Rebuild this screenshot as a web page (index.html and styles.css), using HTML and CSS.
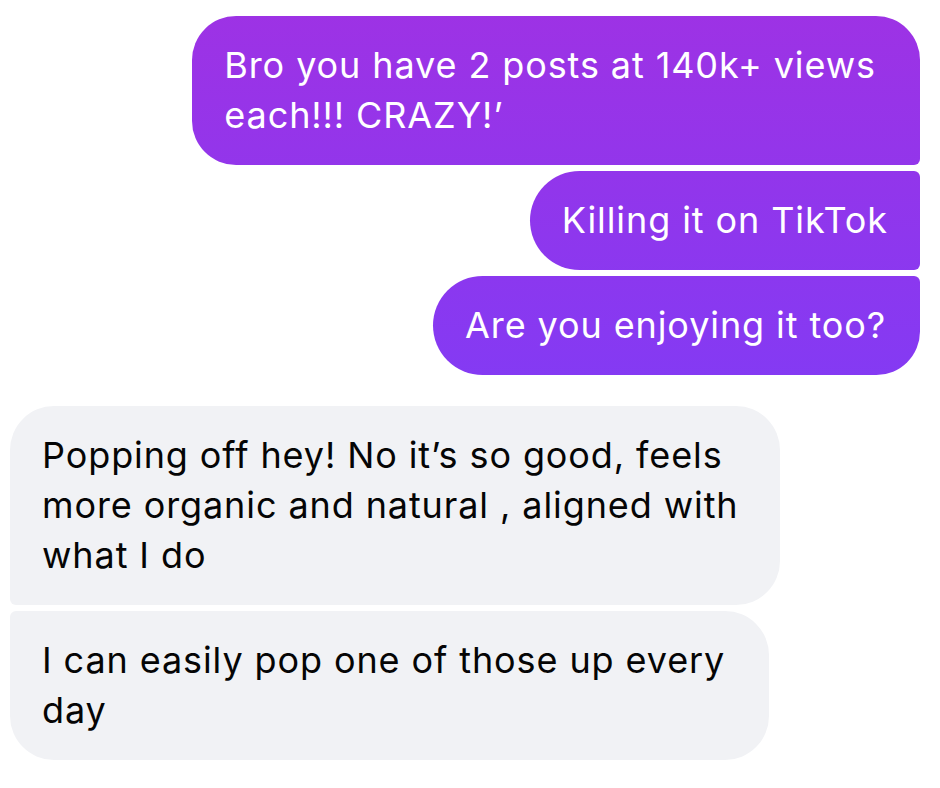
FILE: index.html
```html
<!DOCTYPE html>
<html lang="en">

<head>
    <meta charset="UTF-8">
    <meta name="viewport" content="width=device-width, initial-scale=1.0">
    <title>Messages</title>
    <link rel="stylesheet" href="styles.css">
</head>

<body>
    <div class="thread">
        <div class="group sent">
            <div class="bubble first">Bro you have 2 posts at 140k+ views<br>each!!! CRAZY!’</div>
            <div class="bubble middle">Killing it on TikTok</div>
            <div class="bubble last">Are you enjoying it too?</div>
        </div>

        <div class="group received">
            <div class="bubble first">Popping off hey! No it’s so good, feels<br>more organic and natural , aligned with<br>what I do</div>
            <div class="bubble last">I can easily pop one of those up every<br>day</div>
        </div>
    </div>
</body>

</html>
```

FILE: styles.css
```css
body {
    margin: 0;
    background-color: #ffffff;
    font-family: "Inter", "Liberation Sans", sans-serif;
}

.thread {
    display: flex;
    flex-direction: column;
    gap: 31px;
    padding: 16px 20px 0 10px;
}

.group {
    display: flex;
    flex-direction: column;
    gap: 6px;
}

.bubble {
    font-size: 36px;
    line-height: 50px;
    letter-spacing: 0.9px;
    padding: 24px 32px 25px 32px;
    border-radius: 44px;
    white-space: nowrap;
}

/* sent messages: one gradient shared by the whole column */
.sent {
    align-items: flex-end;
}

.sent .bubble {
    color: #ffffff;
    background: linear-gradient(#9e32e4 0px, #843af3 380px) fixed;
}

.sent .first {
    border-bottom-right-radius: 6px;
    padding-right: 44px;
}

.sent .middle {
    border-radius: 50px 6px 6px 50px;
}

.sent .last {
    border-radius: 50px 6px 44px 50px;
    padding-right: 34px;
}

.received {
    align-items: flex-start;
}

.received .bubble {
    color: #050505;
    background-color: #f1f2f5;
}

.received .first {
    border-bottom-left-radius: 6px;
    padding-right: 41px;
}

.received .last {
    border-top-left-radius: 6px;
    padding-right: 44px;
}
```
